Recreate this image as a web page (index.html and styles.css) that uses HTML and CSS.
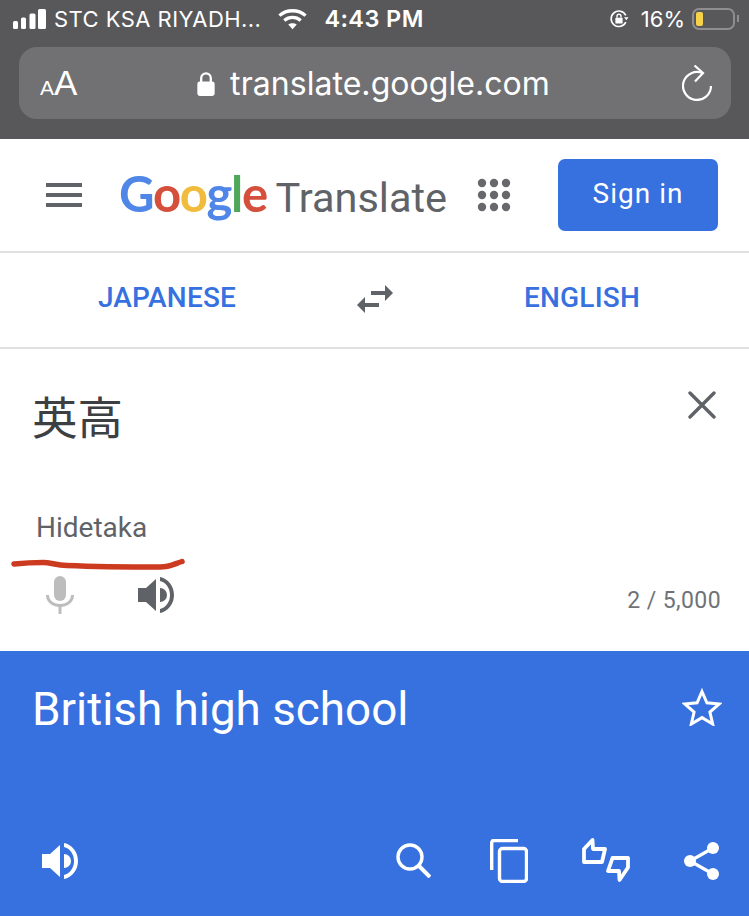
FILE: index.html
```html
<!DOCTYPE html>
<html lang="en">

<head>
  <meta charset="UTF-8" />
  <meta name="viewport" content="width=device-width, initial-scale=1.0" />
  <title>Google Translate</title>
  <link rel="stylesheet" href="styles.css">
</head>

<body>
  <!-- Safari chrome -->
  <div class="chrome">
    <div class="status">
      <svg class="signal" width="33" height="20" viewBox="0 0 33 20" fill="#fff">
        <rect x="0" y="12" width="5" height="8" rx="1.5" />
        <rect x="8" y="8.500" width="5" height="11.500" rx="1.500" />
        <rect x="16.500" y="4.500" width="6" height="15.500" rx="1.500" />
        <rect x="25" y="0" width="8" height="20" rx="1.500" />
      </svg>
      <span class="carrier">STC KSA RIYADH...</span>
      <svg class="wifi" width="29" height="22" viewBox="0 0 30 22" fill="none" stroke="#fff" stroke-width="3.400">
        <path d="M1.500 7.500C9 .8 21 .8 28.500 7.500" />
        <path d="M6.500 12.500c4.800-4.200 12.200-4.200 17 0" />
        <path d="M15 21.500 10.600 16.800c2.600-2 6.200-2 8.800 0z" fill="#fff" stroke="none" />
      </svg>
      <span class="clock">4:43 PM</span>
      <svg class="rotlock" width="22" height="20" viewBox="0 0 22 22" fill="none" stroke="#fff" stroke-width="1.800">
        <path d="M18.500 14.500A8.500 8.500 0 1 1 18.500 7" />
        <path d="M16.500 9h5l-2.500 3.500z" fill="#fff" stroke="none" />
        <rect x="7" y="9.500" width="8" height="6.500" rx="1" fill="#fff" stroke="none" />
        <path d="M8.800 9.500V8a2.200 2.200 0 0 1 4.400 0v1.500" stroke-width="1.500" />
      </svg>
      <span class="percent">16%</span>
      <div class="battery">
        <div class="battery-level"></div>
      </div>
      <div class="battery-tip"></div>
    </div>
    <div class="urlbar">
      <span class="aa"><small>A</small>A</span>
      <div class="url">
        <svg width="18" height="25" viewBox="0 0 18 26">
          <path d="M4 12V7.500a5 5 0 0 1 10 0V12" fill="none" stroke="#fff" stroke-width="2.400" />
          <rect x="0" y="11" width="18" height="15" rx="2.500" fill="#fff" />
        </svg>
        <span>translate.google.com</span>
      </div>
      <svg class="reload" width="31" height="36" viewBox="0 0 31 36" fill="none" stroke="#fff" stroke-width="2.200">
        <path d="M21 8.300A14 14 0 1 0 29 21" />
        <path d="M12.500 .5 21 8l-8 8.500" />
      </svg>
    </div>
  </div>

  <!-- Top bar -->
  <header class="topbar">
    <div class="burger"><i></i><i></i><i></i></div>
    <div class="logo">
      <span class="g-blue">G</span><span class="g-red">o</span><span class="g-yellow">o</span><span class="g-blue">g</span><span class="g-green">l</span><span class="g-red">e</span>
      <span class="product">Translate</span>
    </div>
    <svg class="apps" width="34" height="34" viewBox="0 0 34 34" fill="#68686c">
      <circle cx="5" cy="5" r="4.200" /><circle cx="17" cy="5" r="4.200" /><circle cx="29" cy="5" r="4.200" />
      <circle cx="5" cy="17" r="4.200" /><circle cx="17" cy="17" r="4.200" /><circle cx="29" cy="17" r="4.200" />
      <circle cx="5" cy="29" r="4.200" /><circle cx="17" cy="29" r="4.200" /><circle cx="29" cy="29" r="4.200" />
    </svg>
    <a class="signin">Sign in</a>
  </header>

  <!-- Language selector -->
  <div class="langs">
    <span class="lang">JAPANESE</span>
    <svg class="swap" width="36" height="28" viewBox="0 0 36 28" fill="#5f6368">
      <path d="M14 6h14V0l8 8-8 8v-6H14z" />
      <path d="M22 18H8v-6L0 20l8 8v-6h14z" />
    </svg>
    <span class="lang">ENGLISH</span>
  </div>

  <!-- Source -->
  <section class="source">
    <div class="source-top">
      <span class="source-text">英高</span>
      <svg width="28" height="28" viewBox="0 0 28 28" stroke="#5f6368" stroke-width="3.400" stroke-linecap="round">
        <path d="M2 2l24 24M26 2 2 26" />
      </svg>
    </div>
    <div class="roman">Hidetaka</div>
    <div class="source-tools">
      <svg class="mic" width="28" height="38" viewBox="0 0 28 38" fill="none" stroke="#bdbdbd" stroke-width="3">
        <rect x="8" y="0" width="12" height="25" rx="6" fill="#bdbdbd" stroke="none" />
        <path d="M1.500 19c0 14 25 14 25 0" />
        <path d="M14 29v9" />
      </svg>
      <svg class="speaker" width="36" height="36" viewBox="0 0 36 36" fill="#5f6368">
        <path d="M0 11h8L18 2v32L8 25H0z" />
        <path d="M22 11a7 7 0 0 1 0 14z" />
        <path d="M22 0c8 1.500 14 9 14 18s-6 16.500-14 18v-4c6-1.500 10-7 10-14S28 5.500 22 4z" />
      </svg>
      <span class="counter">2 / 5,000</span>
    </div>
    <svg class="scribble" width="176" height="16" viewBox="0 0 176 16" fill="none">
      <path d="M4 9C14 8 24 7.500 33 7.500c8 0 12 2.500 24 3s50 1.500 93 1.500c10 0 14-3 22-5.500" stroke="#cc3a20" stroke-width="5.500" stroke-linecap="round" />
    </svg>
  </section>

  <!-- Translation -->
  <section class="result">
    <div class="result-top">
      <span class="result-text">British high school</span>
      <svg width="40" height="38" viewBox="0 0 40 38" fill="none" stroke="#fff" stroke-width="3">
        <path d="M20 3.500l4.900 11.300 12.300 1.100-9.300 8.100 2.800 12-10.700-6.400-10.700 6.400 2.800-12-9.300-8.100 12.300-1.100z" />
      </svg>
    </div>
    <div class="result-tools">
      <svg class="speaker" width="36" height="36" viewBox="0 0 36 36" fill="#fff">
        <path d="M0 11h8L18 2v32L8 25H0z" />
        <path d="M22 11a7 7 0 0 1 0 14z" />
        <path d="M22 0c8 1.500 14 9 14 18s-6 16.500-14 18v-4c6-1.500 10-7 10-14S28 5.500 22 4z" />
      </svg>
      <div class="result-actions">
        <svg class="search" width="35" height="35" viewBox="0 0 35 35" fill="none" stroke="#fff" stroke-width="3.400">
          <circle cx="14" cy="14" r="12" />
          <path d="M22.500 22.500 34 34" stroke-width="4" />
        </svg>
        <svg width="38" height="44" viewBox="0 0 38 44" fill="none" stroke="#fff" stroke-width="3.400">
          <path d="M1.700 31V3.500a2 2 0 0 1 2-2H28" />
          <rect x="9.500" y="9.500" width="27" height="33" rx="3" />
        </svg>
        <svg width="48" height="47" viewBox="0 0 48 47" fill="none" stroke="#fff" stroke-width="3.800" stroke-linejoin="round">
          <path d="M2 12 10.500 3 11 12H23l-3 13H2z" />
          <path d="M46 21H30.500l-4.500 13H37l.5 9 8.500-12.500z" />
        </svg>
        <svg width="36" height="40" viewBox="0 0 36 40" fill="#fff" stroke="#fff" stroke-width="3.200">
          <path d="M29 7 6 20 29 33" fill="none" />
          <circle cx="29" cy="7" r="6" stroke="none" />
          <circle cx="6" cy="20" r="6" stroke="none" />
          <circle cx="29" cy="33" r="6" stroke="none" />
        </svg>
      </div>
    </div>
  </section>
</body>

</html>
```

FILE: styles.css
```css
html,
body {
  margin: 0;
  padding: 0;
}

body {
  width: 749px;
  height: 916px;
  overflow: hidden;
  font-family: Roboto, "Liberation Sans", sans-serif;
  background-color: #fff;
}

.chrome {
  height: 139px;
  padding: 0 18px 0 19px;
  box-sizing: border-box;
  background-color: #58585a;
  color: #fff;
}

.status {
  display: flex;
  align-items: center;
  height: 37px;
  margin-left: -6px;
  margin-right: -8px;
  font-family: Inter, "Liberation Sans", sans-serif;
  font-size: 22px;
}

.carrier {
  margin-left: 8px;
  letter-spacing: 0.45px;
  white-space: nowrap;
}

.wifi {
  margin-left: 17px;
}

.clock {
  margin-left: 17px;
  font-size: 23.500px;
  font-weight: 600;
  letter-spacing: 0.4px;
}

.rotlock {
  margin-left: auto;
}

.percent {
  margin-left: 11px;
}

.battery {
  width: 43px;
  height: 22px;
  margin-left: 7px;
  padding: 2px;
  box-sizing: border-box;
  border: 2px solid #8e8e90;
  border-radius: 7px;
}

.battery-level {
  width: 7px;
  height: 100%;
  border-radius: 2px;
  background-color: #f6d24a;
}

.battery-tip {
  width: 2px;
  height: 7px;
  margin-left: 2px;
  background-color: #8e8e90;
}

.urlbar {
  display: flex;
  align-items: center;
  height: 72px;
  margin-top: 10px;
  padding: 0 18px 0 21px;
  border-radius: 18px;
  background-color: #717174;
}

.aa {
  width: 40px;
  font-size: 35px;
  font-family: "Liberation Sans", sans-serif;
}

.aa small {
  font-size: 21px;
}

.url {
  display: flex;
  flex: 1;
  align-items: center;
  justify-content: center;
  gap: 15px;
  padding-right: 15px;
  font-family: Inter, "Liberation Sans", sans-serif;
  font-size: 32px;
  letter-spacing: 0.05px;
}

.topbar {
  display: flex;
  align-items: center;
  height: 112px;
  padding: 0 31px 0 46px;
  border-bottom: 2px solid #e0e0e0;
}

.burger {
  display: flex;
  flex-direction: column;
  gap: 6px;
  width: 36px;
}

.burger i {
  height: 4px;
  background-color: #5f6368;
}

.logo {
  margin-left: 37px;
  margin-top: -4px;
  font-family: Lato, sans-serif;
  font-size: 49px;
  font-weight: 700;
  white-space: nowrap;
  letter-spacing: -1.3px;
}

.g-blue {
  color: #4f86e8;
}

.g-red {
  color: #d5503c;
}

.g-yellow {
  color: #f1bc3d;
}

.g-green {
  color: #4fa75a;
}

.product {
  margin-left: -2px;
  font-family: Roboto, sans-serif;
  font-size: 41.500px;
  font-weight: 400;
  letter-spacing: 0;
  color: #5f6368;
}

.apps {
  margin-left: auto;
}

.signin {
  display: flex;
  align-items: center;
  justify-content: center;
  width: 160px;
  height: 72px;
  margin-left: 47px;
  padding-bottom: 4px;
  box-sizing: border-box;
  border-radius: 7px;
  font-size: 28px;
  letter-spacing: 1px;
  color: #fff;
  background-color: #3770df;
}

.langs {
  display: grid;
  grid-template-columns: 334px 1fr 334px;
  align-items: center;
  justify-items: center;
  height: 96px;
  padding-bottom: 6px;
  box-sizing: border-box;
  border-bottom: 2px solid #e0e0e0;
}

.lang {
  font-size: 28px;
  font-weight: 500;
  letter-spacing: 0.2px;
  text-align: center;
  color: #3770df;
}

.swap {
  margin-top: 4px;
}

.source {
  position: relative;
  height: 302px;
  box-sizing: border-box;
  padding: 34px 33px 0 33px;
}

.source-top {
  display: flex;
  justify-content: space-between;
  align-items: flex-start;
  height: 127px;
  color: #3c4043;
}

.source-top svg {
  margin-top: 8px;
}

.source-text {
  margin-left: -1px;
  font-family: "Noto Sans CJK JP", sans-serif;
  font-size: 45.500px;
  line-height: 64px;
}

.roman {
  margin-left: 3px;
  font-size: 28px;
  line-height: 36px;
  color: #5f6368;
}

.source-tools {
  display: flex;
  align-items: center;
  margin-top: 29px;
}

.mic {
  margin-left: 13px;
}

.source-tools .speaker {
  margin-left: 64px;
}

.counter {
  margin-left: auto;
  margin-top: 12px;
  margin-right: -5px;
  font-size: 23px;
  letter-spacing: 0.4px;
  color: #6f7377;
}

.scribble {
  position: absolute;
  left: 10px;
  top: 206px;
}

.result {
  display: flex;
  flex-direction: column;
  height: 265px;
  box-sizing: border-box;
  padding: 28px 29px 32px 33px;
  color: #fff;
  background-color: #3770df;
}

.result-top {
  display: flex;
  justify-content: space-between;
  align-items: flex-start;
  margin-right: -2px;
}

.result-top svg {
  margin-top: 9px;
}

.result-text {
  margin-left: -1px;
  font-size: 45.800px;
  line-height: 62px;
}

.result-tools {
  display: flex;
  justify-content: space-between;
  align-items: center;
  margin-top: auto;
}

.result-tools .speaker {
  margin-left: 9px;
}

.result-actions {
  display: flex;
  align-items: center;
  gap: 54px;
}

.search {
  margin-right: 5px;
}
```
